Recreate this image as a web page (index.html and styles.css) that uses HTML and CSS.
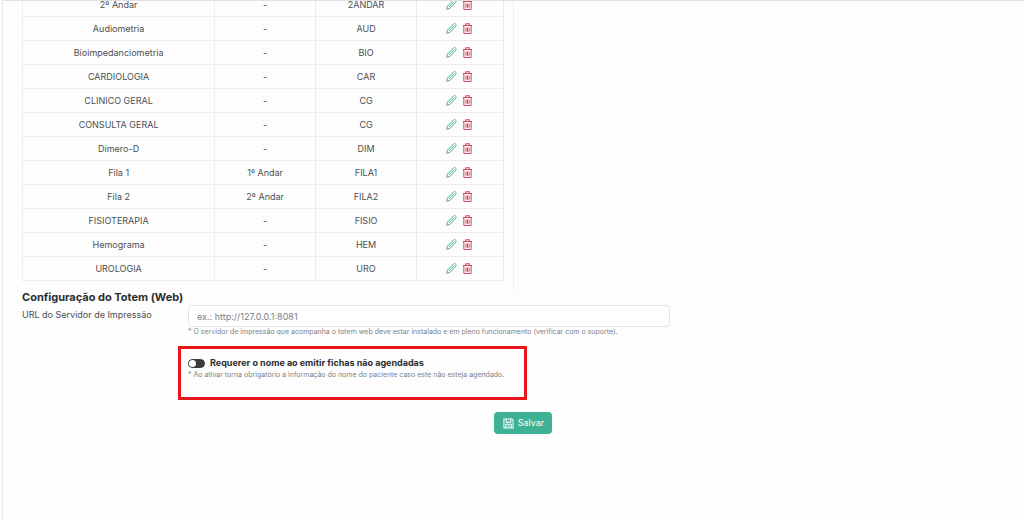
FILE: index.html
```html
<!DOCTYPE html>
<html lang="pt-BR">
<head>
<meta charset="utf-8">
<title>Configuração do Totem</title>
<link rel="stylesheet" href="styles.css">
<script src="rows.js" defer></script>
</head>
<body>
<svg class="sprite" aria-hidden="true">
  <symbol id="pencil" viewBox="0 0 12 12"><path d="M.8 11.200l.7-3.500L8.300.9q1-.7 2 .1t.600 2.300L4.200 10.300zM3.200 8.700L8.600 3.300" fill="none" stroke="currentColor" stroke-width="1" stroke-linejoin="round"/></symbol>
  <symbol id="trash" viewBox="0 0 12 12"><path d="M1 2.800h10M2 2.800v7.500q0 1.200 1.200 1.200h5.600q1.200 0 1.200-1.200V2.800M4 2.800V.9h4v1.900M4.300 5v4.500M6 5v4.500M7.700 5v4.500" fill="none" stroke="currentColor" stroke-width="1.100"/></symbol>
</svg>
<main class="page">
  <section class="panel">
    <table class="queues">
      <colgroup><col class="col-name"><col class="col-floor"><col class="col-code"><col class="col-actions"></colgroup>
      <tbody id="queues"></tbody>
    </table>
  </section>
  <form class="settings">
    <h2 class="title">Configuração do Totem (Web)</h2>
    <div class="field">
      <label class="label" for="url">URL do Servidor de Impressão</label>
      <div class="control">
        <input class="input" id="url" type="text" placeholder="ex.: http://127.0.0.1:8081">
        <p class="hint">* O servidor de impressão que acompanha o totem web deve estar instalado e em pleno funcionamento (verificar com o suporte).</p>
      </div>
    </div>
    <div class="highlight">
      <div class="option">
        <input class="switch" id="require-name" type="checkbox" role="switch">
        <label class="option-label" for="require-name">Requerer o nome ao emitir fichas não agendadas</label>
      </div>
      <p class="hint">* Ao ativar torna obrigatório a informação do nome do paciente caso este não esteja agendado.</p>
    </div>
    <div class="actions">
      <button class="save" type="button">
        <svg class="save-icon" viewBox="0 0 12 12" aria-hidden="true"><path d="M1 1h8.500L11 2.500V11H1zM3.500 1v3.500h5V1M3 11V6.800h6V11M4.500 9h3" fill="none" stroke="currentColor" stroke-width="1.100"/></svg>
        Salvar
      </button>
    </div>
  </form>
</main>
</body>
</html>
```

FILE: rows.js
```js
const queues = [
  ["2º Andar", "-", "2ANDAR"],
  ["Audiometria", "-", "AUD"],
  ["Bioimpedanciometria", "-", "BIO"],
  ["CARDIOLOGIA", "-", "CAR"],
  ["CLINICO GERAL", "-", "CG"],
  ["CONSULTA GERAL", "-", "CG"],
  ["Dímero-D", "-", "DIM"],
  ["Fila 1", "1º Andar", "FILA1"],
  ["Fila 2", "2º Andar", "FILA2"],
  ["FISIOTERAPIA", "-", "FISIO"],
  ["Hemograma", "-", "HEM"],
  ["UROLOGIA", "-", "URO"]
];

const iconButton = (icon, label) =>
  `<button class="icon-button ${icon}" type="button" aria-label="${label}"><svg class="icon"><use href="#${icon}"/></svg></button>`;

document.getElementById("queues").innerHTML = queues.map(row =>
  `<tr>${row.map(text => `<td>${text}</td>`).join("")}<td><div class="row-actions">${iconButton("pencil", "Editar")}${iconButton("trash", "Excluir")}</div></td></tr>`
).join("");
```

FILE: styles.css
```css
* { box-sizing: border-box; }

html { background: #fdfdfd; }

body {
  margin: 0;
  font-family: Inter, "Open Sans", sans-serif;
  font-size: 9px;
  line-height: 12px;
  color: #4c4f52;
}

.sprite { position: absolute; width: 0; height: 0; }

.page {
  min-height: 100vh;
  margin-left: 2px;
  border-left: 1px solid #e6e7ea;
  border-top: 1px solid #e0e1e6;
  overflow: hidden;
}

.panel {
  width: 50%;
  margin-top: -9px;
  padding: 0 9px 10px 19px;
  border-right: 1px solid #eeeff1;
}

.queues {
  width: 100%;
  table-layout: fixed;
  border-collapse: collapse;
  text-align: center;
}

.col-name { width: 40%; }
.col-floor, .col-code { width: 21%; }
.col-actions { width: 18%; }

.queues td {
  height: 24px;
  padding: 0;
  border: 1px solid #ededef;
}

.row-actions {
  display: flex;
  justify-content: center;
  gap: 5px;
}

.icon-button {
  display: flex;
  padding: 0;
  border: 0;
  background: none;
}

.icon { width: 11px; height: 11px; }
.pencil { color: #3fae8d; }
.trash { color: #d0475b; }

.settings { padding: 0 0 24px 19px; }

.title {
  margin: 0;
  font-size: 11px;
  line-height: 12px;
  font-weight: 700;
  color: #2b2e31;
}

.field {
  display: grid;
  grid-template-columns: 166px minmax(0, 482px);
  margin-top: 2px;
}

.label { padding-top: 4px; }

.input {
  display: block;
  width: 100%;
  height: 22px;
  padding: 0 8px;
  border: 1px solid #dfe5e8;
  border-radius: 4px;
  background: #fff;
  color: #55585b;
  font: inherit;
}

.input::placeholder { color: #7b7e81; opacity: 1; }

.hint {
  margin: 0;
  font-size: 7px;
  line-height: 10px;
  color: #808386;
}

.highlight {
  width: fit-content;
  min-width: 349px;
  margin: 9px 0 0 156px;
  padding: 8px 8px 16px 7px;
  border: 3px solid #e8151b;
}

.highlight .hint { line-height: 12px; }

.option {
  display: flex;
  align-items: center;
  gap: 5px;
}

.switch {
  appearance: none;
  display: flex;
  width: 17px;
  height: 9px;
  margin: 0;
  border: 1px solid #383b3e;
  border-radius: 5px;
  background: #383b3e;
}

.switch::before {
  content: "";
  width: 7px;
  height: 7px;
  border-radius: 50%;
  background: #fff;
}

.switch:checked { justify-content: flex-end; }

.option-label { font-weight: 700; color: #2b2e31; }

.actions {
  display: flex;
  justify-content: center;
  margin-top: 12px;
}

.save {
  display: flex;
  align-items: center;
  gap: 4px;
  height: 22px;
  padding: 0 8px 0 9px;
  border: 0;
  border-radius: 4px;
  background: #3eb094;
  color: #fff;
  font: inherit;
}

.save-icon { width: 11px; height: 11px; }
```
